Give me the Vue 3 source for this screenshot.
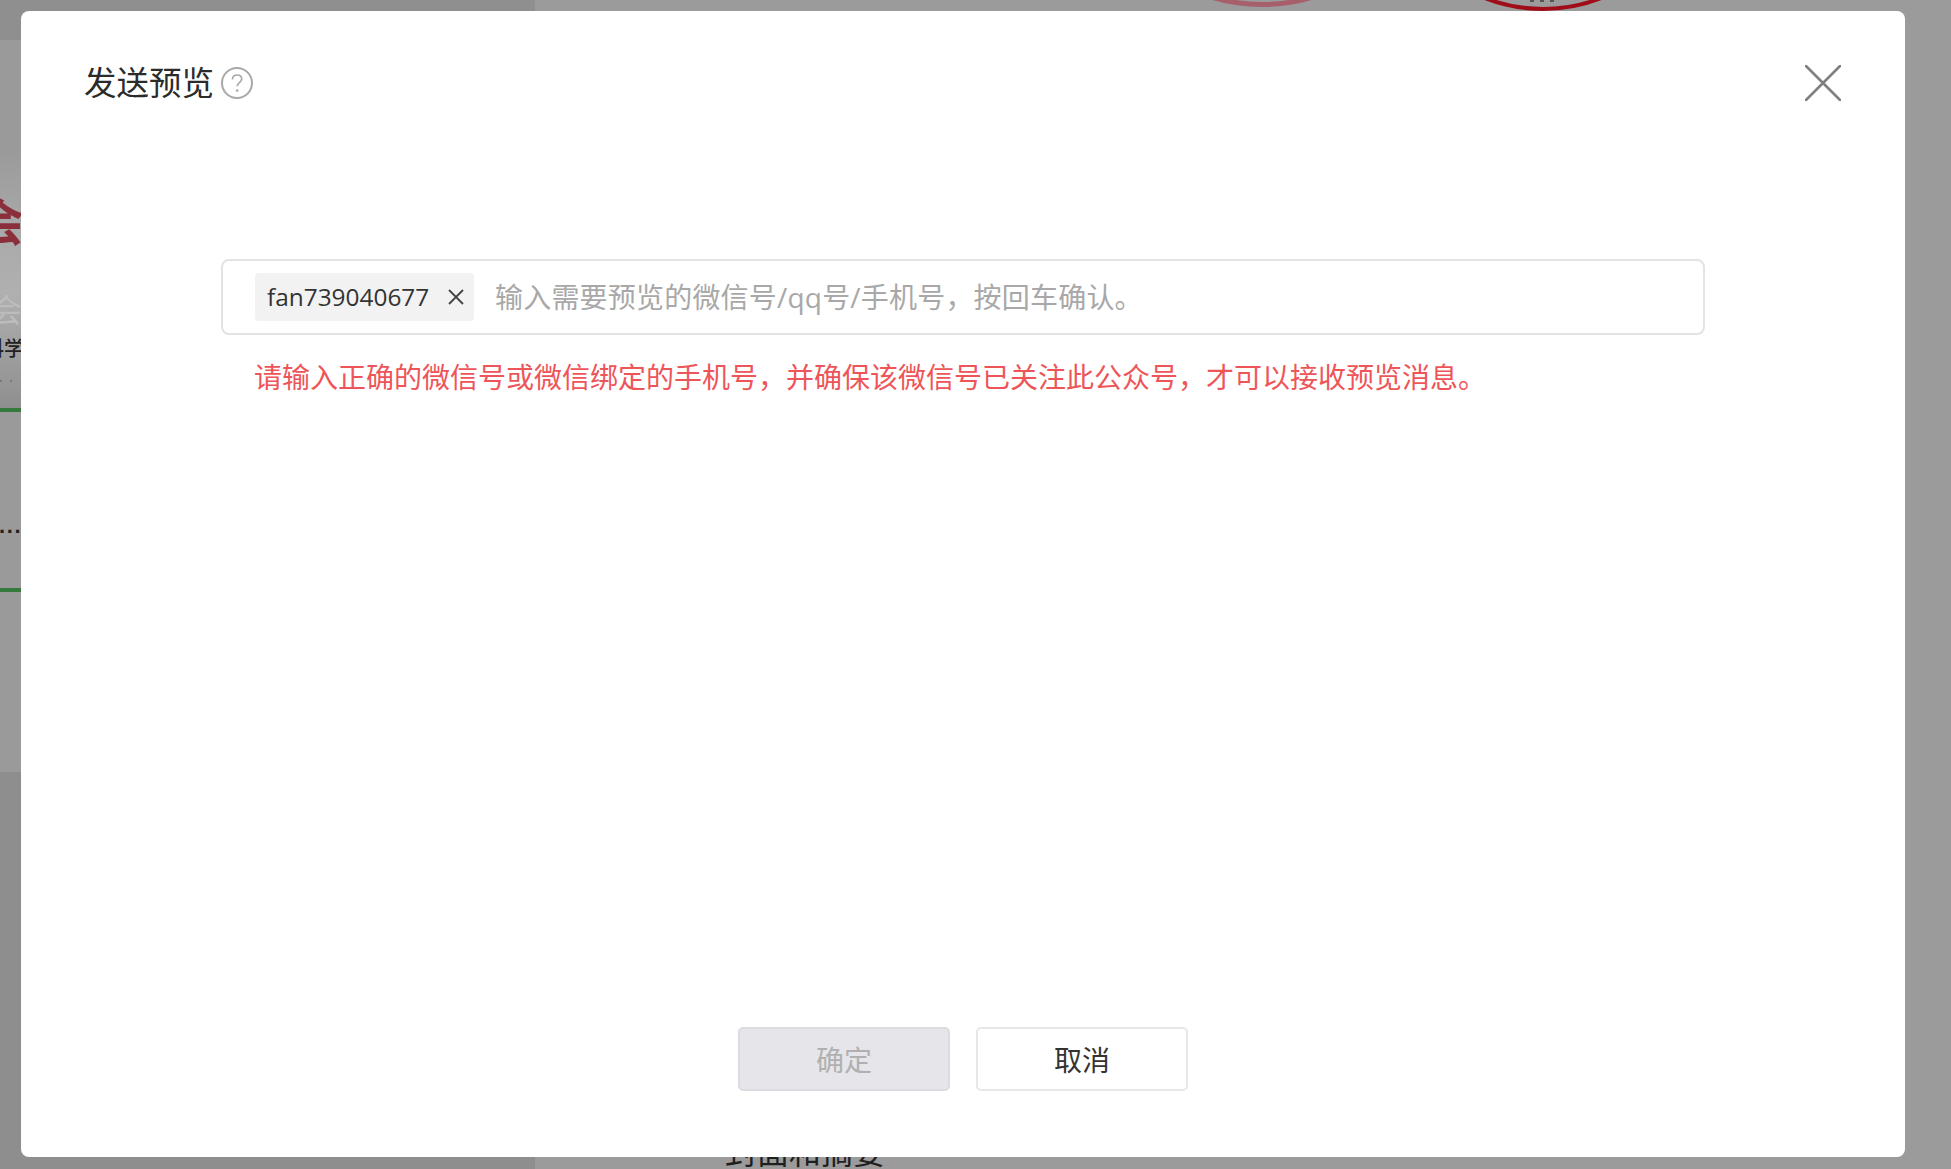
<script setup>
const placeholder = '输入需要预览的微信号/qq号/手机号，按回车确认。'
const errorText = '请输入正确的微信号或微信绑定的手机号，并确保该微信号已关注此公众号，才可以接收预览消息。'
</script>

<template>
  <div class="screen">
    <div class="backdrop" aria-hidden="true">
      <div class="bg-top"></div>
      <div class="bg-low"></div>
      <div class="bg-fade"></div>
      <span class="bg-hui">会</span>
      <div class="bg-rule"></div>
      <span class="bg-hui-light">会</span>
      <span class="bg-ke">科学</span>
      <div class="bg-specks"></div>
      <span class="bg-dots">...</span>
      <div class="bg-green one"></div>
      <div class="bg-green two"></div>
      <div class="bg-stamp pink"></div>
      <div class="bg-stamp red"></div>
      <div class="bg-stamp-mark"></div>
      <span class="bg-cover">封面和摘要</span>
    </div>

    <section class="modal">
      <header class="head">
        <div class="title-row">
          <h2 class="title">发送预览</h2>
          <svg class="help" viewBox="0 0 32 32" width="32" height="32">
            <circle cx="16" cy="16" r="15" fill="none" stroke="#a8a8a8" stroke-width="2" />
            <path d="M11.4 12.4c.2-2.8 2.1-4.4 4.7-4.4 2.7 0 4.6 1.6 4.6 3.9 0 1.7-.8 2.6-2.3 3.7-1.5 1.1-2.1 1.9-2.1 3.6" fill="none" stroke="#a8a8a8" stroke-width="1.7" />
            <circle cx="16.2" cy="23.6" r="1.3" fill="#a8a8a8" />
          </svg>
        </div>
        <svg class="close" viewBox="0 0 36 36" width="36" height="36">
          <path d="M1 1L35 35M35 1L1 35" stroke="#808080" stroke-width="2.6" stroke-linecap="round" />
        </svg>
      </header>

      <div class="body">
        <div class="field">
          <span class="tag">
            <span class="tag-text">fan739040677</span>
            <svg class="tag-x" viewBox="0 0 16 16" width="16" height="16">
              <path d="M1 1L15 15M15 1L1 15" stroke="#444" stroke-width="1.8" />
            </svg>
          </span>
          <span class="placeholder">{{ placeholder }}</span>
        </div>
        <p class="error">{{ errorText }}</p>
      </div>

      <footer class="foot">
        <button class="btn disabled" type="button">确定</button>
        <button class="btn" type="button">取消</button>
      </footer>
    </section>
  </div>
</template>

<style>
html, body { margin: 0; background: #999; }
</style>

<style scoped>
.screen {
  position: relative;
  box-sizing: border-box;
  width: 1951px;
  height: 1169px;
  overflow: hidden;
  display: flex;
  padding: 11px 46px 12px 21px;
  background: linear-gradient(90deg, #9a9a9a 535px, #9b9b9b 535px);
  font-family: "Open Sans", "Noto Sans CJK SC", sans-serif;
}
.backdrop { position: absolute; inset: 0; overflow: hidden; }
.bg-top { position: absolute; left: 0; top: 0; width: 535px; height: 40px; background: #8f8f8f; }
.bg-low { position: absolute; left: 0; top: 772px; width: 535px; height: 397px; background: #8e8e8e; }
.bg-fade {
  position: absolute; left: 0; top: 150px; width: 21px; height: 258px;
  background: linear-gradient(#9a9a9a, #a9a9a9 30%, #b0b0b0 55%, #8f8f8f);
}
.bg-hui {
  position: absolute; left: -26px; top: 190px;
  font: 700 50px/58px "Noto Sans CJK SC", sans-serif; color: #8a2f3b;
}
.bg-rule { position: absolute; left: 0; top: 306px; width: 6px; height: 1px; background: #8a5a60; }
.bg-hui-light {
  position: absolute; left: -10px; top: 288px;
  font: 400 32px/40px "Noto Sans CJK SC", sans-serif; color: #bcbcbc;
}
.bg-ke {
  position: absolute; left: -16px; top: 336px;
  font: 500 20px/24px "Noto Sans CJK SC", sans-serif; color: #222;
}
.bg-specks {
  position: absolute; left: 0; top: 380px; width: 12px; height: 2px;
  background: radial-gradient(circle at 1px 1px, #777 1px, transparent 1px) 0 0 / 10px 2px repeat-x;
}
.bg-dots {
  position: absolute; left: -1px; top: 512px;
  font: 700 22px/28px "Liberation Sans", sans-serif; letter-spacing: 1.6px; color: #222;
}
.bg-green { position: absolute; left: 0; width: 21px; height: 4px; background: #35793d; }
.bg-green.one { top: 408px; }
.bg-green.two { top: 588px; }
.bg-stamp { position: absolute; border-radius: 50%; box-sizing: border-box; }
.bg-stamp.pink {
  left: 1082px; top: -353px; width: 360px; height: 360px;
  border: 5px solid #a85f6c;
}
.bg-stamp.red {
  left: 1381px; top: -313px; width: 324px; height: 324px;
  border: 4px solid #a00d18;
}
.bg-stamp-mark {
  position: absolute; left: 1530px; top: 0; width: 30px; height: 2px;
  background: repeating-linear-gradient(90deg, #555 0 4px, transparent 4px 10px);
}
.bg-cover {
  position: absolute; left: 725px; top: 1131px;
  font: 400 32px/38px "Noto Sans CJK SC", sans-serif; color: #1f1f1f;
}

.modal {
  position: relative;
  z-index: 1;
  flex: 1;
  display: flex;
  flex-direction: column;
  background: #fff;
  border-radius: 8px;
}
.head {
  display: flex;
  justify-content: space-between;
  align-items: center;
  box-sizing: border-box;
  height: 144px;
  padding: 0 64px 0 63px;
}
.title-row { display: flex; align-items: center; gap: 7px; }
.title {
  margin: 0;
  font-size: 32.5px;
  line-height: 44px;
  font-weight: 400;
  color: #2b2b2b;
}
.help { display: block; }
.close { display: block; }

.body {
  flex: 1;
  padding: 104px 200px 0 200px;
}
.field {
  box-sizing: border-box;
  height: 76px;
  border: 2px solid #e3e3e3;
  border-radius: 8px;
  display: flex;
  align-items: center;
  padding-left: 32px;
  gap: 21px;
}
.tag {
  display: flex;
  align-items: center;
  justify-content: space-between;
  box-sizing: border-box;
  width: 219px;
  height: 48px;
  padding: 0 10px 0 12px;
  background: #f2f2f2;
  border-radius: 4px;
}
.tag-text { font-size: 24.4px; line-height: 48px; color: #333; white-space: nowrap; }
.tag-x { display: block; flex: none; }
.placeholder { font-size: 28px; line-height: 40px; letter-spacing: 0.2px; color: #a8a8a8; white-space: nowrap; }
.error {
  margin: 22px 0 0 33px;
  font-size: 28px;
  line-height: 40px;
  color: #ee5558;
  white-space: nowrap;
}

.foot {
  display: flex;
  justify-content: center;
  gap: 26px;
  padding-bottom: 66px;
}
.btn {
  box-sizing: border-box;
  width: 212px;
  height: 64px;
  border: 2px solid #e8e8ec;
  border-radius: 5px;
  background: #fff;
  color: #333;
  font-family: inherit;
  font-size: 28px;
  line-height: 1;
  padding: 2px 0 0;
}
.btn.disabled {
  background: #e6e6ea;
  border-color: #dcdce0;
  color: #b0b0b0;
}
</style>
